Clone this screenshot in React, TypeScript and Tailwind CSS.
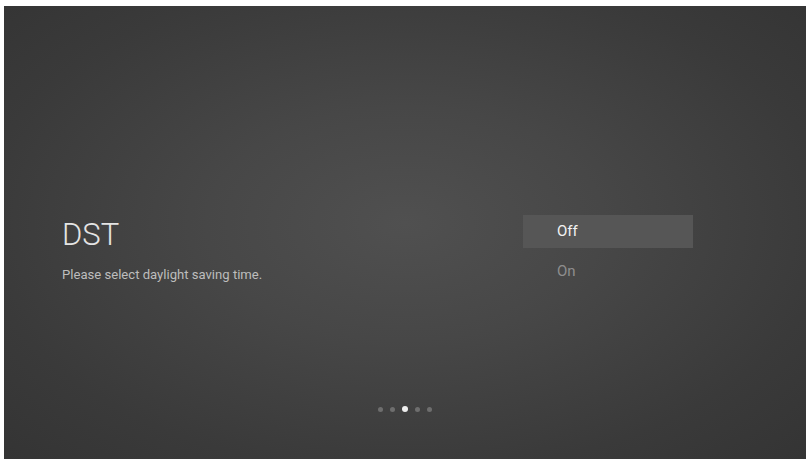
import React from 'react';

const options = [
  { label: 'Off', selected: true },
  { label: 'On', selected: false },
];

const dots = [false, false, true, false, false];

export default function App() {
  return (
    <div className="w-[811px] h-[462px] bg-white pt-[6px] pl-[4px] font-['Roboto',sans-serif]">
      <div className="w-[802px] h-[453px] flex flex-col bg-[radial-gradient(ellipse_at_50%_48%,#505050_0%,#474747_35%,#3a3a3a_75%,#343434_100%)]">
        <div className="flex pt-[209px] pl-[58px]">
          <div className="w-[461px]">
            <h1 className="text-[31px] leading-[40px] font-light text-[#e4e4e4]">DST</h1>
            <p className="mt-[12px] text-[13.1px] leading-[16px] text-[#bdbdbd]">
              Please select daylight saving time.
            </p>
          </div>
          <div className="w-[170px] flex flex-col gap-[7px]">
            {options.map((o) => (
              <div
                key={o.label}
                className={
                  'h-[33px] flex items-center pl-[34px] text-[15px] ' +
                  (o.selected ? 'bg-[#565656] text-[#f2f2f2]' : 'text-[#8e8e8e]')
                }
              >
                {o.label}
              </div>
            ))}
          </div>
        </div>
        <div className="mt-auto pb-[47px] flex justify-center items-center gap-[7px] pr-[1px]">
          {dots.map((active, i) => (
            <span
              key={i}
              className={
                active
                  ? 'w-[6px] h-[6px] rounded-full bg-[#eeeeee]'
                  : 'w-[5px] h-[5px] rounded-full bg-[#6e6e6e]'
              }
            />
          ))}
        </div>
      </div>
    </div>
  );
}
